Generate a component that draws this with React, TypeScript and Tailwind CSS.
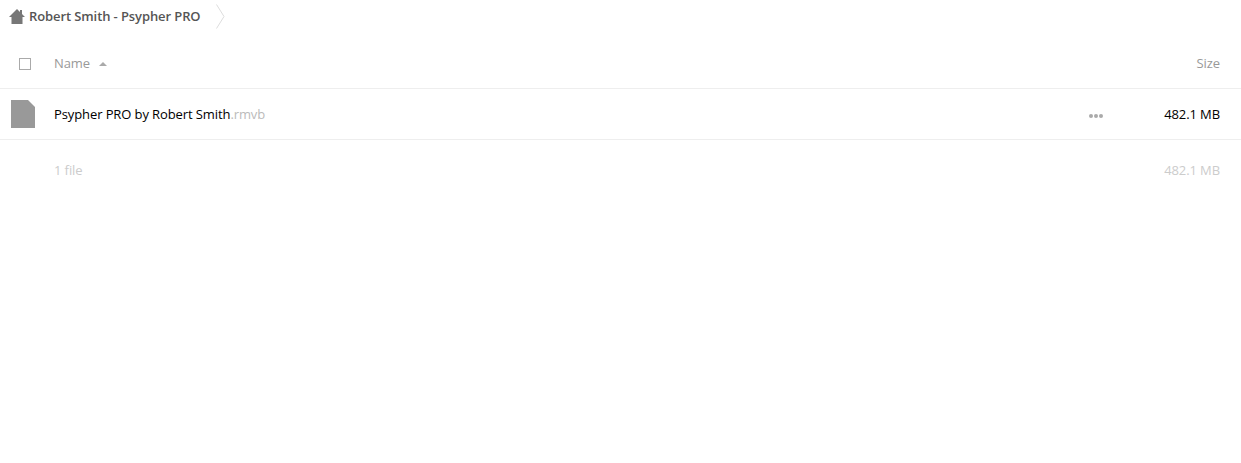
export default function App() {
  return (
    <div className="min-h-[463px] bg-white font-['Open_Sans',sans-serif] text-[13px] tracking-[-0.1px] text-[#555]">
      {/* Breadcrumb */}
      <div className="flex h-[44px] items-start">
        <div className="flex h-[33px] items-center pl-[9px]">
          <svg width="16" height="15" viewBox="0 0 16 15" className="mb-[1px] shrink-0">
            <path d="M8 0 L11 3 L11 1 L13 1 L13 5 L16 8 L13.5 8 L13.5 15 L2.5 15 L2.5 8 L0 8 Z" fill="#777" />
          </svg>
          <span className="ml-[4px] font-semibold whitespace-nowrap">Robert Smith - Psypher PRO</span>
          <svg width="9" height="25" viewBox="0 0 9 25" className="ml-[15px] shrink-0">
            <path d="M0.5 0.5 L8 12.5 L0.5 24.5" fill="none" stroke="#ddd" strokeWidth="1" />
          </svg>
        </div>
      </div>

      {/* Header */}
      <div className="flex h-[45px] items-center border-b border-[#eee] pr-[21px] pb-[4px] text-[#999]">
        <div className="flex w-[54px] shrink-0 justify-center pr-[4px]">
          <div className="h-[12px] w-[12px] border border-[#aaa]" />
        </div>
        <div className="flex items-center">
          <span>Name</span>
          <span className="ml-[9px] h-0 w-0 border-x-[4px] border-b-[4px] border-x-transparent border-b-[#aaa]" />
        </div>
        <span className="ml-auto">Size</span>
      </div>

      {/* File row */}
      <div className="flex h-[51px] items-center border-b border-[#eee] pt-[2px] pr-[21px]">
        <div className="mb-[2px] flex w-[54px] shrink-0 pl-[11px]">
          <svg width="24" height="28" viewBox="0 0 24 28">
            <path d="M0 0 L17 0 L24 7 L24 28 L0 28 Z" fill="#999" />
          </svg>
        </div>
        <div className="min-w-0 flex-1 whitespace-nowrap text-black">
          Psypher PRO by Robert Smith<span className="text-[#bbb]">.rmvb</span>
        </div>
        <div className="mt-[2px] flex w-[14px] shrink-0 items-center justify-between">
          <span className="h-[4px] w-[4px] rounded-full bg-[#aaa]" />
          <span className="h-[4px] w-[4px] rounded-full bg-[#aaa]" />
          <span className="h-[4px] w-[4px] rounded-full bg-[#aaa]" />
        </div>
        <div className="w-[117px] shrink-0 text-right text-black">482.1 MB</div>
      </div>

      {/* Summary */}
      <div className="flex h-[61px] items-center pr-[21px] pl-[54px] text-[#ccc]">
        <span>1 file</span>
        <span className="ml-auto">482.1 MB</span>
      </div>
    </div>
  )
}
